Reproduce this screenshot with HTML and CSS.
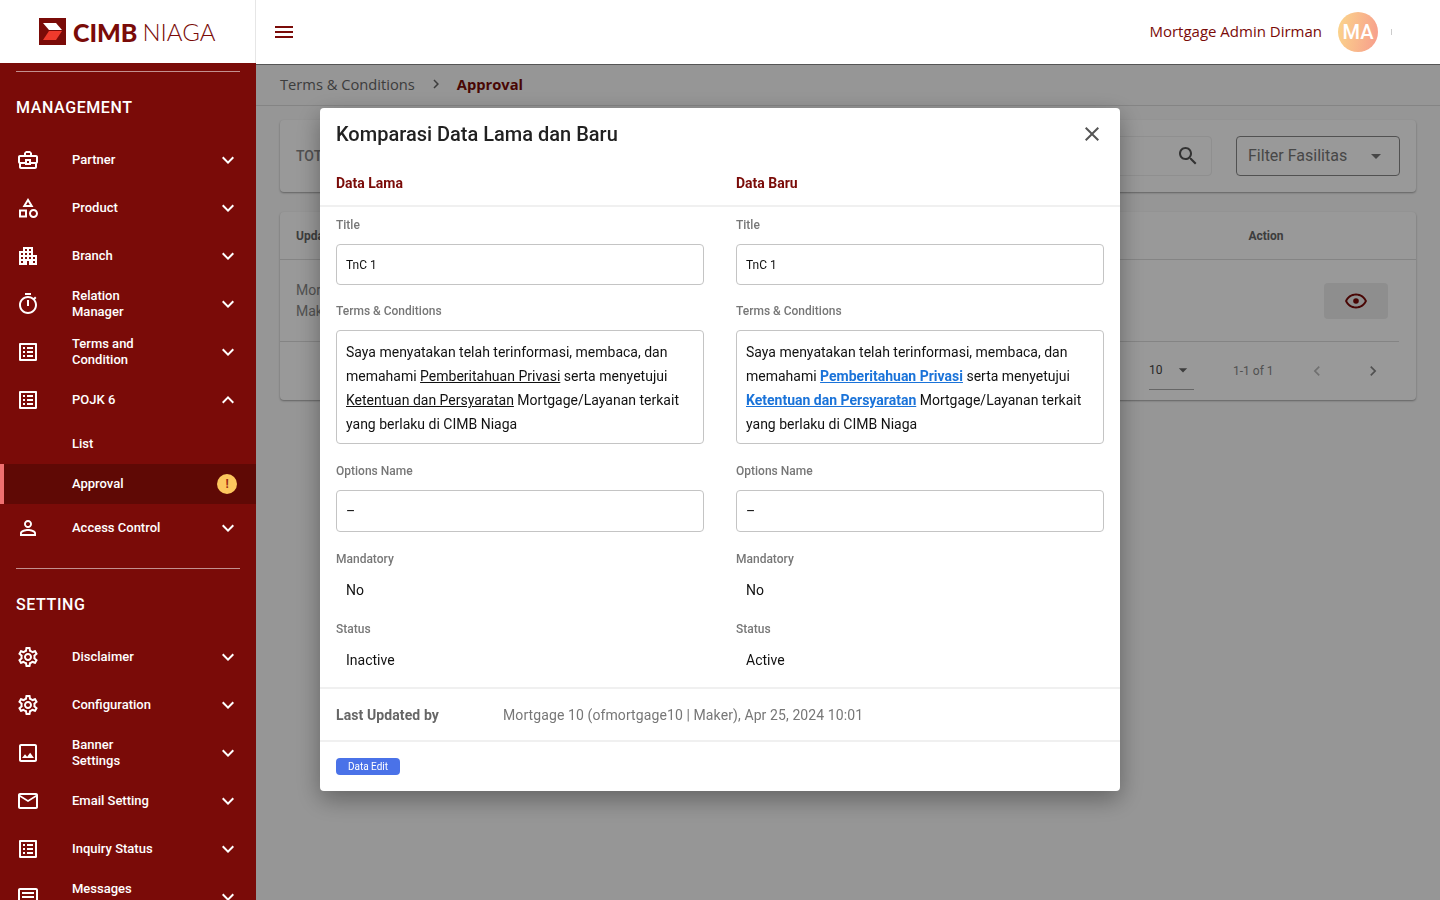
FILE: index.html
```html
<!DOCTYPE html>
<html lang="en">
<head>
    <meta charset="UTF-8">
    <meta name="viewport" content="width=device-width, initial-scale=1.0">
    <title>Approval</title>
    <link rel="stylesheet" href="styles.css">
</head>
<body>

<svg class="sprite" xmlns="http://www.w3.org/2000/svg">
    <symbol id="i-case" viewBox="0 0 24 24"><path d="M20 7h-4V5l-2-2h-4L8 5v2H4c-1.1 0-2 .9-2 2v5c0 .75.4 1.38 1 1.73V19c0 1.11.89 2 2 2h14c1.11 0 2-.89 2-2v-3.28c.59-.35 1-.99 1-1.72V9c0-1.1-.9-2-2-2zM10 5h4v2h-4V5zM4 9h16v5h-5v-3H9v3H4V9zm9 6h-2v-2h2v2zm6 4H5v-3h4v1h6v-1h4v3z"/></symbol>
    <symbol id="i-category" viewBox="0 0 24 24"><path d="M12 2l-5.5 9h11L12 2zm0 3.84L13.93 9h-3.87L12 5.84zM17.5 13c-2.49 0-4.5 2.01-4.5 4.5s2.01 4.5 4.5 4.5 4.5-2.01 4.5-4.5-2.01-4.5-4.5-4.5zm0 7c-1.38 0-2.5-1.12-2.5-2.5s1.12-2.5 2.5-2.5 2.5 1.12 2.5 2.5-1.12 2.5-2.5 2.5zM3 21.5h8v-8H3v8zm2-6h4v4H5v-4z"/></symbol>
    <symbol id="i-building" viewBox="0 0 24 24"><path d="M17 11V3H7v4H3v14h8v-4h2v4h8V11h-4zM7 19H5v-2h2v2zm0-4H5v-2h2v2zm0-4H5V9h2v2zm4 4H9v-2h2v2zm0-4H9V9h2v2zm0-4H9V5h2v2zm4 8h-2v-2h2v2zm0-4h-2V9h2v2zm0-4h-2V5h2v2zm4 12h-2v-2h2v2zm0-4h-2v-2h2v2z"/></symbol>
    <symbol id="i-timer" viewBox="0 0 24 24"><path d="M15 1H9v2h6V1zm-4 13h2V8h-2v6zm8.03-6.61l1.42-1.42c-.43-.51-.9-.99-1.41-1.41l-1.42 1.42C16.07 4.74 14.12 4 12 4c-4.97 0-9 4.03-9 9s4.02 9 9 9 9-4.03 9-9c0-2.12-.74-4.07-1.97-5.61zM12 20c-3.87 0-7-3.13-7-7s3.13-7 7-7 7 3.13 7 7-3.13 7-7 7z"/></symbol>
    <symbol id="i-list" viewBox="0 0 24 24"><path d="M19 5v14H5V5h14m1.1-2H3.9c-.5 0-.9.4-.9.9v16.2c0 .4.4.9.9.9h16.2c.4 0 .9-.5.9-.9V3.9c0-.5-.5-.9-.9-.9zM11 7h6v2h-6V7zm0 4h6v2h-6v-2zm0 4h6v2h-6zM7 7h2v2H7zm0 4h2v2H7zm0 4h2v2H7z"/></symbol>
    <symbol id="i-person" viewBox="0 0 24 24"><path d="M12 5.9c1.16 0 2.1.94 2.1 2.1s-.94 2.1-2.1 2.1S9.9 9.16 9.9 8s.94-2.1 2.1-2.1m0 9c2.97 0 6.1 1.46 6.1 2.1v1.1H5.9V17c0-.64 3.13-2.1 6.1-2.1M12 4C9.79 4 8 5.79 8 8s1.79 4 4 4 4-1.79 4-4-1.79-4-4-4zm0 9c-2.67 0-8 1.34-8 4v3h16v-3c0-2.66-5.33-4-8-4z"/></symbol>
    <symbol id="i-gear" viewBox="0 0 24 24"><path d="M19.43 12.98c.04-.32.07-.64.07-.98 0-.34-.03-.66-.07-.98l2.11-1.65c.19-.15.24-.42.12-.64l-2-3.46c-.09-.16-.26-.25-.44-.25-.06 0-.12.01-.17.03l-2.49 1c-.52-.4-1.08-.73-1.69-.98l-.38-2.65C14.46 2.18 14.25 2 14 2h-4c-.25 0-.46.18-.49.42l-.38 2.65c-.61.25-1.17.59-1.69.98l-2.49-1c-.06-.02-.12-.03-.18-.03-.17 0-.34.09-.43.25l-2 3.46c-.13.22-.07.49.12.64l2.11 1.65c-.04.32-.07.65-.07.98 0 .33.03.66.07.98l-2.11 1.65c-.19.15-.24.42-.12.64l2 3.46c.09.16.26.25.44.25.06 0 .12-.01.17-.03l2.49-1c.52.4 1.08.73 1.69.98l.38 2.65c.03.24.24.42.49.42h4c.25 0 .46-.18.49-.42l.38-2.65c.61-.25 1.17-.59 1.69-.98l2.49 1c.06.02.12.03.18.03.17 0 .34-.09.43-.25l2-3.46c.12-.22.07-.49-.12-.64l-2.11-1.65zm-1.98-1.71c.04.31.05.52.05.73 0 .21-.02.43-.05.73l-.14 1.13.89.7 1.08.84-.7 1.21-1.27-.51-1.04-.42-.9.68c-.43.32-.84.56-1.25.73l-1.06.43-.16 1.13-.2 1.35h-1.4l-.19-1.35-.16-1.13-1.06-.43c-.43-.18-.83-.41-1.23-.71l-.91-.7-1.06.43-1.27.51-.7-1.21 1.08-.84.89-.7-.14-1.13c-.03-.31-.05-.54-.05-.74s.02-.43.05-.73l.14-1.13-.89-.7-1.08-.84.7-1.21 1.27.51 1.04.42.9-.68c.43-.32.84-.56 1.25-.73l1.06-.43.16-1.13.2-1.35h1.39l.19 1.35.16 1.13 1.06.43c.43.18.83.41 1.23.71l.91.7 1.06-.43 1.27-.51.7 1.21-1.07.85-.89.7.14 1.13zM12 8c-2.21 0-4 1.79-4 4s1.79 4 4 4 4-1.79 4-4-1.79-4-4-4zm0 6c-1.1 0-2-.9-2-2s.9-2 2-2 2 .9 2 2-.9 2-2 2z"/></symbol>
    <symbol id="i-image" viewBox="0 0 24 24"><path d="M19 5v14H5V5h14m0-2H5c-1.1 0-2 .9-2 2v14c0 1.1.9 2 2 2h14c1.1 0 2-.9 2-2V5c0-1.1-.9-2-2-2zm-4.86 8.86l-3 3.87L9 13.14 6 17h12l-3.86-5.14z"/></symbol>
    <symbol id="i-mail" viewBox="0 0 24 24"><path d="M22 6c0-1.1-.9-2-2-2H4c-1.1 0-2 .9-2 2v12c0 1.1.9 2 2 2h16c1.1 0 2-.9 2-2V6zm-2 0l-8 5-8-5h16zm0 12H4V8l8 5 8-5v10z"/></symbol>
    <symbol id="i-article" viewBox="0 0 24 24"><path d="M20 3H4c-1.1 0-2 .9-2 2v14c0 1.1.9 2 2 2h16c1.1 0 2-.9 2-2V5c0-1.1-.9-2-2-2zm0 16H4V5h16v14zM6 7h12v2H6zm0 4h12v2H6zm0 4h8v2H6z"/></symbol>
    <symbol id="i-down" viewBox="0 0 24 24"><path d="M16.59 8.59L12 13.17 7.41 8.59 6 10l6 6 6-6z"/></symbol>
    <symbol id="i-up" viewBox="0 0 24 24"><path d="M12 8l-6 6 1.41 1.41L12 10.83l4.59 4.58L18 14z"/></symbol>
    <symbol id="i-menu" viewBox="0 0 24 24"><path d="M3 18h18v-2H3v2zm0-5h18v-2H3v2zm0-7v2h18V6H3z"/></symbol>
    <symbol id="i-close" viewBox="0 0 24 24"><path d="M19 6.41L17.59 5 12 10.59 6.41 5 5 6.41 10.59 12 5 17.59 6.41 19 12 13.41 17.59 19 19 17.59 13.41 12z"/></symbol>
    <symbol id="i-search" viewBox="0 0 24 24"><path d="M15.5 14h-.79l-.28-.27C15.41 12.59 16 11.11 16 9.5 16 5.91 13.09 3 9.5 3S3 5.91 3 9.5 5.91 16 9.5 16c1.61 0 3.09-.59 4.23-1.57l.27.28v.79l5 4.99L20.49 19l-4.99-5zm-6 0C7.01 14 5 11.99 5 9.5S7.01 5 9.5 5 14 7.01 14 9.5 11.99 14 9.5 14z"/></symbol>
    <symbol id="i-eye" viewBox="0 0 24 24"><path d="M12 6.5c3.79 0 7.17 2.13 8.82 5.5-1.65 3.37-5.02 5.5-8.82 5.5S4.83 15.37 3.18 12C4.83 8.63 8.21 6.5 12 6.5m0-2C7 4.5 2.73 7.61 1 12c1.73 4.39 6 7.5 11 7.5s9.27-3.11 11-7.5c-1.73-4.39-6-7.5-11-7.5z"/><circle cx="12" cy="12" r="2.8"/></symbol>
    <symbol id="i-right" viewBox="0 0 24 24"><path d="M10 6L8.59 7.41 13.17 12l-4.58 4.59L10 18l6-6z"/></symbol>
    <symbol id="i-left" viewBox="0 0 24 24"><path d="M15.41 7.41L14 6l-6 6 6 6 1.41-1.41L10.83 12z"/></symbol>
    <symbol id="i-drop" viewBox="0 0 24 24"><path d="M7 10l5 5 5-5z"/></symbol>
</svg>

<aside class="sidebar">
    <div class="logo">
        <svg class="logo-mark" viewBox="0 0 27 27">
            <rect width="27" height="27" fill="#7a0b08"/>
            <path d="M4 5h13l6 7H10z" fill="#fff"/>
            <path d="M10 13h13l-6 9H4z" fill="#ee3a2c"/>
        </svg>
        <span class="logo-cimb">CIMB</span>
        <span class="logo-niaga">NIAGA</span>
    </div>

    <div class="side-body">
        <hr class="side-line">
        <h2 class="side-title">MANAGEMENT</h2>

        <a class="nav-item"><svg class="nav-icon"><use href="#i-case"/></svg><span class="nav-text">Partner</span><svg class="nav-arrow"><use href="#i-down"/></svg></a>
        <a class="nav-item"><svg class="nav-icon"><use href="#i-category"/></svg><span class="nav-text">Product</span><svg class="nav-arrow"><use href="#i-down"/></svg></a>
        <a class="nav-item"><svg class="nav-icon"><use href="#i-building"/></svg><span class="nav-text">Branch</span><svg class="nav-arrow"><use href="#i-down"/></svg></a>
        <a class="nav-item"><svg class="nav-icon"><use href="#i-timer"/></svg><span class="nav-text">Relation<br>Manager</span><svg class="nav-arrow"><use href="#i-down"/></svg></a>
        <a class="nav-item"><svg class="nav-icon"><use href="#i-list"/></svg><span class="nav-text">Terms and<br>Condition</span><svg class="nav-arrow"><use href="#i-down"/></svg></a>
        <a class="nav-item"><svg class="nav-icon"><use href="#i-list"/></svg><span class="nav-text">POJK 6</span><svg class="nav-arrow"><use href="#i-up"/></svg></a>
        <a class="nav-sub">List</a>
        <a class="nav-sub nav-sub-active">Approval<span class="warn-badge">!</span></a>
        <a class="nav-item"><svg class="nav-icon"><use href="#i-person"/></svg><span class="nav-text">Access Control</span><svg class="nav-arrow"><use href="#i-down"/></svg></a>

        <hr class="side-line side-line-2">
        <h2 class="side-title">SETTING</h2>

        <a class="nav-item"><svg class="nav-icon"><use href="#i-gear"/></svg><span class="nav-text">Disclaimer</span><svg class="nav-arrow"><use href="#i-down"/></svg></a>
        <a class="nav-item"><svg class="nav-icon"><use href="#i-gear"/></svg><span class="nav-text">Configuration</span><svg class="nav-arrow"><use href="#i-down"/></svg></a>
        <a class="nav-item"><svg class="nav-icon"><use href="#i-image"/></svg><span class="nav-text">Banner<br>Settings</span><svg class="nav-arrow"><use href="#i-down"/></svg></a>
        <a class="nav-item"><svg class="nav-icon"><use href="#i-mail"/></svg><span class="nav-text">Email Setting</span><svg class="nav-arrow"><use href="#i-down"/></svg></a>
        <a class="nav-item"><svg class="nav-icon"><use href="#i-list"/></svg><span class="nav-text">Inquiry Status</span><svg class="nav-arrow"><use href="#i-down"/></svg></a>
        <a class="nav-item"><svg class="nav-icon"><use href="#i-article"/></svg><span class="nav-text">Messages<br>Setting</span><svg class="nav-arrow"><use href="#i-down"/></svg></a>
    </div>
</aside>

<div class="main">
    <header class="topbar">
        <svg class="menu-icon"><use href="#i-menu"/></svg>
        <div class="user">
            <span class="user-name">Mortgage Admin Dirman</span>
            <span class="avatar">MA</span>
            <span class="user-tick"></span>
        </div>
    </header>

    <div class="breadcrumb">
        <span class="crumb">Terms &amp; Conditions</span>
        <svg class="crumb-sep"><use href="#i-right"/></svg>
        <span class="crumb-now">Approval</span>
    </div>

    <div class="content">
        <section class="card filter-card">
            <span class="total">TOTAL</span>
            <div class="search-box"><svg class="search-icon"><use href="#i-search"/></svg></div>
            <div class="select-box">Filter Fasilitas<svg class="select-arrow"><use href="#i-drop"/></svg></div>
        </section>

        <section class="card table-card">
            <div class="table-head">
                <span>Updated</span>
                <span class="col-action">Action</span>
            </div>
            <div class="table-row">
                <span class="row-user">Mortgage<br>Maker</span>
                <button class="eye-btn"><svg class="eye-icon"><use href="#i-eye"/></svg></button>
            </div>
            <div class="pager">
                <span class="pager-size">10<svg class="pager-arrow"><use href="#i-drop"/></svg></span>
                <span class="pager-count">1-1 of 1</span>
                <svg class="pager-left"><use href="#i-left"/></svg>
                <svg class="pager-right"><use href="#i-right"/></svg>
            </div>
        </section>
    </div>
</div>

<div class="overlay">
    <div class="modal">
        <div class="modal-head">
            <h1>Komparasi Data Lama dan Baru</h1>
            <svg class="close-icon"><use href="#i-close"/></svg>
        </div>

        <div class="compare-head">
            <span>Data Lama</span>
            <span>Data Baru</span>
        </div>

        <div class="compare">
            <div class="compare-col">
                <div class="field field-title">
                    <label>Title</label>
                    <div class="box box-title">TnC 1</div>
                </div>
                <div class="field">
                    <label>Terms &amp; Conditions</label>
                    <div class="box box-terms">Saya menyatakan telah terinformasi, membaca, dan memahami <u>Pemberitahuan Privasi</u> serta menyetujui <u>Ketentuan dan Persyaratan</u> Mortgage/Layanan terkait yang berlaku di CIMB Niaga</div>
                </div>
                <div class="field">
                    <label>Options Name</label>
                    <div class="box box-option">–</div>
                </div>
                <div class="field">
                    <label>Mandatory</label>
                    <div class="plain">No</div>
                </div>
                <div class="field field-last">
                    <label>Status</label>
                    <div class="plain">Inactive</div>
                </div>
            </div>

            <div class="compare-col">
                <div class="field field-title">
                    <label>Title</label>
                    <div class="box box-title">TnC 1</div>
                </div>
                <div class="field">
                    <label>Terms &amp; Conditions</label>
                    <div class="box box-terms">Saya menyatakan telah terinformasi, membaca, dan memahami <a class="tc-link">Pemberitahuan Privasi</a> serta menyetujui <a class="tc-link">Ketentuan dan Persyaratan</a> Mortgage/Layanan terkait yang berlaku di CIMB Niaga</div>
                </div>
                <div class="field">
                    <label>Options Name</label>
                    <div class="box box-option">–</div>
                </div>
                <div class="field">
                    <label>Mandatory</label>
                    <div class="plain">No</div>
                </div>
                <div class="field field-last">
                    <label>Status</label>
                    <div class="plain">Active</div>
                </div>
            </div>
        </div>

        <div class="updated">
            <span class="updated-label">Last Updated by</span>
            <span class="updated-value">Mortgage 10 (ofmortgage10 | Maker), Apr 25, 2024 10:01</span>
        </div>

        <div class="modal-foot">
            <span class="tag">Data Edit</span>
        </div>
    </div>
</div>

</body>
</html>
```

FILE: styles.css
```css
*{
    box-sizing: border-box;
}
html, body{
    height: 100%;
}
body{
    margin: 0;
    display: flex;
    overflow: hidden;
    font-family: Roboto, "Liberation Sans", sans-serif;
    background-color: #fff;
}
.sprite{
    display: none;
}

/* sidebar */
.sidebar{
    width: 256px;
    height: 900px;
    flex-shrink: 0;
    overflow: hidden;
    position: relative;
    z-index: 3;
    background: #7a0b08;
}
.logo{
    height: 63px;
    background: #fff;
    border-right: 1px solid #e6e6e6;
    display: flex;
    align-items: center;
    padding-left: 39px;
}
.logo-mark{
    width: 27px;
    height: 27px;
    margin-right: 7px;
}
.logo-cimb{
    font-family: Lato, sans-serif;
    font-weight: 900;
    font-size: 25px;
    color: #7a0b08;
    margin-right: 5px;
}
.logo-niaga{
    font-family: Lato, sans-serif;
    font-weight: 300;
    font-size: 24px;
    color: #7a0b08;
}
.side-body{
    padding-top: 8px;
}
.side-line{
    margin: 0 16px;
    height: 1px;
    border: none;
    background: rgba(255,255,255,0.55);
}
.side-line-2{
    margin-top: 16px;
}
.side-title{
    margin: 0;
    height: 64px;
    padding: 7px 16px 0;
    display: flex;
    align-items: center;
    font-size: 16px;
    font-weight: 500;
    letter-spacing: 0.6px;
    color: #fff;
}
.nav-item{
    height: 48px;
    display: flex;
    align-items: center;
    padding: 0 16px;
    color: #fff;
}
.nav-icon{
    width: 24px;
    height: 24px;
    fill: #fff;
    flex-shrink: 0;
}
.nav-text{
    flex: 1;
    margin-left: 32px;
    font-size: 13px;
    font-weight: 500;
    line-height: 16px;
}
.nav-arrow{
    width: 24px;
    height: 24px;
    fill: #fff;
}
.nav-sub{
    height: 40px;
    display: flex;
    align-items: center;
    padding-left: 72px;
    padding-bottom: 2px;
    font-size: 13px;
    font-weight: 500;
    color: #fff;
}
.nav-sub-active{
    background: #5f0905;
    border-left: 4px solid #f07070;
    padding-left: 68px;
    padding-right: 19px;
    justify-content: space-between;
}
.warn-badge{
    width: 20px;
    height: 20px;
    margin-top: 2px;
    border-radius: 50%;
    background: #fdc75e;
    color: #9b2c14;
    font-size: 12px;
    font-weight: 700;
    display: flex;
    align-items: center;
    justify-content: center;
}

/* top bar and page behind the modal */
.main{
    flex: 1;
    min-width: 0;
    background: #fafafa;
}
.topbar{
    height: 65px;
    background: #fff;
    border-bottom: 1px solid #555;
    display: flex;
    align-items: center;
    justify-content: space-between;
    padding: 0 48px 0 16px;
    position: relative;
    z-index: 3;
}
.menu-icon{
    width: 24px;
    height: 24px;
    fill: #7a0b08;
}
.user{
    display: flex;
    align-items: center;
}
.user-name{
    margin-top: -2px;
    font-family: "Open Sans", sans-serif;
    font-size: 15px;
    color: #7a0b08;
}
.avatar{
    width: 40px;
    height: 40px;
    margin-left: 16px;
    border-radius: 50%;
    background: linear-gradient(100deg, #fbd68b, #f79c8c);
    color: #fff;
    font-size: 20px;
    font-weight: 500;
    display: flex;
    align-items: center;
    justify-content: center;
}
.user-tick{
    width: 1px;
    height: 6px;
    margin-left: 13px;
    background: #ccc;
}
.breadcrumb{
    height: 41px;
    display: flex;
    align-items: center;
    padding-left: 24px;
    padding-bottom: 2px;
    border-bottom: 1px solid #ddd;
}
.crumb{
    font-family: "Open Sans", sans-serif;
    font-size: 14.7px;
    color: #666;
}
.crumb-sep{
    width: 18px;
    height: 18px;
    margin: 0 12px;
    fill: #666;
}
.crumb-now{
    font-family: "Open Sans", sans-serif;
    font-size: 14.7px;
    font-weight: 700;
    color: #7a0b08;
}
.content{
    padding: 14px 24px 0;
}
.card{
    background: #fff;
    border-radius: 4px;
    box-shadow: 0 1px 2px rgba(0,0,0,0.35);
}
.filter-card{
    height: 72px;
    display: flex;
    align-items: center;
    padding: 0 16px;
    margin-bottom: 20px;
}
.total{
    flex: 1;
    font-size: 14px;
    font-weight: 500;
    color: #888;
}
.search-box{
    width: 260px;
    height: 40px;
    border: 1px solid #eee;
    border-radius: 4px;
    display: flex;
    align-items: center;
    justify-content: flex-end;
    padding-right: 11px;
    margin-right: 24px;
}
.search-icon{
    width: 24px;
    height: 24px;
    fill: #555;
}
.select-box{
    width: 164px;
    height: 40px;
    border: 1px solid #888;
    border-radius: 4px;
    display: flex;
    align-items: center;
    justify-content: space-between;
    padding: 0 11px 1px;
    font-size: 16px;
    color: #777;
}
.select-arrow{
    width: 24px;
    height: 24px;
    fill: #777;
}
.table-card{
    height: 188px;
}
.table-head{
    height: 48px;
    display: flex;
    align-items: center;
    justify-content: space-between;
    padding-left: 16px;
    border-bottom: 1px solid #ddd;
    font-size: 12px;
    font-weight: 700;
    color: #666;
}
.col-action{
    width: 300px;
    text-align: center;
}
.table-row{
    height: 82px;
    margin-right: 17px;
    padding: 0 11px 0 16px;
    display: flex;
    align-items: center;
    justify-content: space-between;
    border-bottom: 1px solid #ddd;
    font-size: 14px;
    color: #888;
    line-height: 21px;
}
.eye-btn{
    width: 64px;
    height: 36px;
    border: none;
    border-radius: 4px;
    background: #ededed;
    display: flex;
    align-items: center;
    justify-content: center;
}
.eye-icon{
    width: 24px;
    height: 24px;
    fill: #7a0b08;
}
.pager{
    height: 57px;
    display: flex;
    align-items: center;
    justify-content: flex-end;
    padding-right: 33px;
    font-size: 12px;
    color: #888;
}
.pager-size{
    width: 45px;
    height: 32px;
    margin-top: 6px;
    padding-bottom: 6px;
    display: flex;
    align-items: center;
    justify-content: space-between;
    border-bottom: 1px solid #aaa;
    color: #444;
}
.pager-arrow{
    width: 20px;
    height: 20px;
    margin-right: 1px;
    fill: #666;
}
.pager-count{
    margin-left: 39px;
    width: 74px;
}
.pager-left,
.pager-right{
    width: 20px;
    height: 20px;
    fill: #bbb;
}
.pager-right{
    margin-left: 36px;
    fill: #888;
}

/* modal */
.overlay{
    position: fixed;
    top: 65px;
    left: 0;
    right: 0;
    bottom: 0;
    z-index: 2;
    background: rgba(0,0,0,0.4);
    display: flex;
    justify-content: center;
    align-items: flex-start;
    padding-top: 43px;
}
.modal{
    width: 800px;
    background: #fff;
    border-radius: 4px;
    box-shadow: 0 8px 24px rgba(0,0,0,0.35);
}
.modal-head{
    height: 52px;
    padding: 0 16px;
    display: flex;
    align-items: center;
    justify-content: space-between;
}
.modal-head h1{
    margin: 0;
    font-size: 20px;
    font-weight: 500;
    color: #212121;
}
.close-icon{
    width: 24px;
    height: 24px;
    fill: #555;
}
.compare-head{
    display: grid;
    grid-template-columns: 1fr 1fr;
    gap: 32px;
    height: 47px;
    padding: 15px 16px 0;
    border-bottom: 2px solid #f0f0f0;
    font-size: 14px;
    font-weight: 700;
    color: #7a0b08;
}
.compare{
    display: grid;
    grid-template-columns: 1fr 1fr;
    gap: 32px;
    padding: 10px 16px 15px;
    border-bottom: 2px solid #f0f0f0;
}
.field{
    margin-bottom: 19px;
}
.field-title{
    margin-bottom: 18px;
}
.field-last{
    margin-bottom: 0;
}
.field label{
    display: block;
    height: 16px;
    margin-bottom: 11px;
    font-size: 12px;
    font-weight: 500;
    line-height: 16px;
    color: #777;
}
.box{
    border: 1px solid #c4c4c4;
    border-radius: 4px;
    padding: 0 9px;
    color: #111;
}
.box-title{
    height: 41px;
    line-height: 40px;
    font-size: 12px;
}
.box-terms{
    height: 114px;
    padding-top: 9px;
    font-size: 14px;
    line-height: 24px;
}
.box-option{
    height: 42px;
    line-height: 40px;
    font-size: 14px;
}
.plain{
    height: 24px;
    padding-left: 10px;
    font-size: 14px;
    line-height: 24px;
    color: #111;
}
.tc-link{
    color: #1a73d9;
    font-weight: 700;
    text-decoration: underline;
}
.updated{
    height: 53px;
    display: flex;
    align-items: center;
    padding: 0 16px;
    border-bottom: 2px solid #f0f0f0;
    font-size: 14px;
    letter-spacing: 0.1px;
}
.updated-label{
    width: 167px;
    font-weight: 700;
    color: #666;
}
.updated-value{
    color: #777;
}
.modal-foot{
    height: 49px;
    padding: 16px 16px 0;
}
.tag{
    display: flex;
    align-items: center;
    justify-content: center;
    width: 64px;
    height: 17px;
    border-radius: 4px;
    background: #4a72e8;
    color: #fff;
    font-size: 10px;
}
```
